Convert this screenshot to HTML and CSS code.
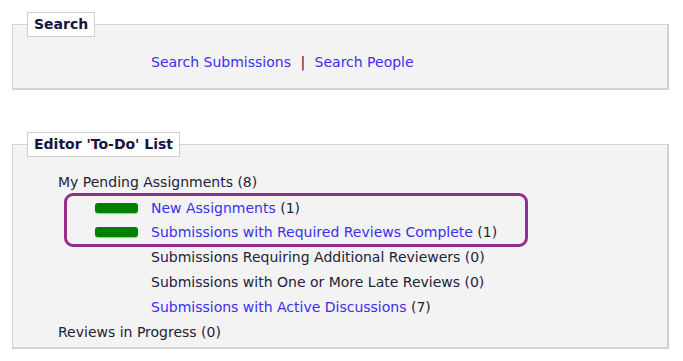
FILE: index.html
```html
<!DOCTYPE html>
<html>
<head>
<meta charset="utf-8">
<link rel="stylesheet" href="styles.css">
</head>
<body>
<fieldset class="panel search-panel">
  <legend class="panel-title">Search</legend>
  <div class="search-links">
    <a href="#" class="link">Search Submissions</a>
    <span class="sep">|</span>
    <a href="#" class="link">Search People</a>
  </div>
</fieldset>

<fieldset class="panel todo-panel">
  <legend class="panel-title">Editor 'To-Do' List</legend>
  <div class="todo">
    <div class="row">My Pending Assignments (8)</div>
    <div class="highlight">
      <div class="row sub"><span class="bar"></span><a href="#" class="link">New Assignments</a>&nbsp;(1)</div>
      <div class="row sub"><span class="bar"></span><a href="#" class="link">Submissions with Required Reviews Complete</a>&nbsp;(1)</div>
    </div>
    <div class="row item">Submissions Requiring Additional Reviewers (0)</div>
    <div class="row item">Submissions with One or More Late Reviews (0)</div>
    <div class="row item"><a href="#" class="link">Submissions with Active Discussions</a>&nbsp;(7)</div>
    <div class="row">Reviews in Progress (0)</div>
  </div>
</fieldset>
</body>
</html>
```

FILE: styles.css
```css
html, body {
  margin: 0;
  padding: 0;
  background: #ffffff;
}
body {
  font-family: "DejaVu Sans", Verdana, sans-serif;
  font-size: 14px;
  color: #22223a;
}
.panel {
  margin: 0 0 0 12px;
  width: 657px;
  box-sizing: border-box;
  border: 1px solid #d2d2d2;
  border-right-width: 2px;
  border-bottom-width: 2px;
  background: #f3f3f3;
  padding: 0 0 0 14px;
}
.search-panel {
  margin-top: 12px;
  height: 78px;
}
.todo-panel {
  margin-top: 42px;
  height: 217px;
}
.panel-title {
  background: #ffffff;
  border: 1px solid #cfcfcf;
  font-weight: bold;
  font-size: 14px;
  color: #15153f;
  padding: 0 6px;
  height: 25px;
  line-height: 23px;
  box-sizing: border-box;
}
.link {
  color: #3a2ff0;
  text-decoration: none;
}
.search-links {
  padding: 16px 0 0 124px;
  line-height: 18px;
}
.sep {
  color: #22223a;
  margin: 0 5px;
}
.todo {
  padding: 13px 0 0 31px;
}
.row {
  line-height: 25px;
  white-space: nowrap;
}
.item {
  padding-left: 93px;
}
.highlight {
  width: 464px;
  box-sizing: border-box;
  border: 3px solid #93308f;
  border-radius: 9px;
  margin: -2px 0 -2px 6px;
  padding: 0;
}
.sub {
  display: flex;
  align-items: center;
  padding-left: 28px;
  line-height: 24px;
}
.bar {
  width: 43px;
  height: 10px;
  background: #008000;
  border-radius: 3px;
  box-shadow: 0 1px 1px rgba(0,0,0,0.25);
  margin-right: 13px;
  flex-shrink: 0;
}
```
